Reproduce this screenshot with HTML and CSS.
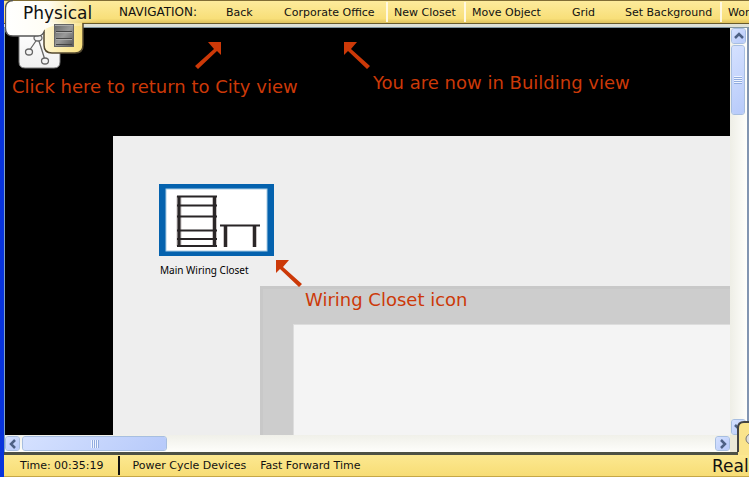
FILE: index.html
```html
<!DOCTYPE html>
<html lang="en">
<head>
<meta charset="utf-8">
<title>Physical workspace</title>
<link rel="stylesheet" href="styles.css">
</head>
<body>
<div class="app">
  <header class="topbar">
    <nav class="nav">
      <span class="nav-label">NAVIGATION:</span>
      <button>Back</button>
      <button>Corporate Office</button>
      <button class="divided">New Closet</button>
      <button class="divided">Move Object</button>
      <button>Grid</button>
      <button>Set Background</button>
      <button class="divided">Wor</button>
    </nav>
    <div class="mode">
      <svg class="mode-art" width="96" height="72" viewBox="0 0 96 72" aria-hidden="true">
        <defs>
          <linearGradient id="white" x1="0" y1="0" x2="0" y2="1"><stop offset="0" stop-color="#fff"/><stop offset="1" stop-color="#f0f0f0"/></linearGradient>
          <linearGradient id="fade" x1="0" y1="0" x2="1" y2="0"><stop offset="0" stop-color="#fff"/><stop offset=".45" stop-color="#fffdf4"/><stop offset="1" stop-color="#fbe698" stop-opacity="0"/></linearGradient>
          <linearGradient id="gold" x1="0" y1="0" x2="1" y2="0"><stop offset="0" stop-color="#fff6d2"/><stop offset="1" stop-color="#f8df7c"/></linearGradient>
          <linearGradient id="rack" x1="0" y1="0" x2="1" y2="1"><stop offset="0" stop-color="#666"/><stop offset=".5" stop-color="#999"/><stop offset="1" stop-color="#555"/></linearGradient>
        </defs>
        <path d="M14 30V62Q14 68 20 68H49Q55 68 55 62V30Z" fill="url(#white)" stroke="#777"/>
        <g fill="#f4f4f4" stroke="#666" stroke-width="1.3"><path d="M33 38L24 51M33 38L40 60"/><ellipse cx="33" cy="38" rx="4" ry="3"/><ellipse cx="24" cy="52" rx="3.5" ry="3"/><ellipse cx="40" cy="61" rx="3.5" ry="3"/></g>
        <path d="M39 22V45Q39 53 47 53H70Q78 53 78 45V23" fill="url(#gold)" stroke="#554a30" stroke-width="1.5"/>
        <path d="M0 8Q0 1 8 1H96V22H77V26H48Q39 28 38 32Q36 36 32 36H8Q0 36 0 28Z" fill="url(#fade)"/>
        <path d="M8 .5Q.5 1 .5 8V28Q.5 36 8 36H33Q37 36 39 32" fill="none" stroke="#555" stroke-width="1.3"/>
        <rect x="49.5" y="24.5" width="19" height="22" fill="url(#rack)" stroke="#666"/>
        <path d="M51 31.5H67M51 38.5H67M51 44.5H67" stroke="#444"/><path d="M50 25.5H68M51 32.5H67M51 39.5H67" stroke="#aaa"/>
      </svg>
      <button class="mode-name">Physical</button>
    </div>
  </header>

  <main class="workspace">
    <div class="canvas">
      <div class="building"></div>
      <div class="wall"></div>
      <div class="room"></div>
      <figure class="closet">
        <svg width="115" height="72" viewBox="0 0 115 72" role="img" aria-label="Rack and table">
          <rect width="115" height="72" fill="#0462ae"/>
          <rect x="7" y="5" width="101" height="62" fill="#fff" stroke="#a9cbe3"/>
          <path d="M20 12V62M55.500 12V62M66.500 42V63M95.500 42V63" stroke="#c9c4c4" stroke-width="5" fill="none"/>
          <path d="M20 12V62M55.500 12V62M66.500 42V63M95.500 42V63" stroke="#2b2728" stroke-width="3" fill="none"/>
          <path d="M18 12.500H58M18 21.500H58M18 32.500H58M18 46.500H58M18 55H58M18 62H58M61 41.500H101" stroke="#292526" stroke-width="2"/>
        </svg>
        <figcaption>Main Wiring Closet</figcaption>
      </figure>
      <svg class="arrow arrow-back" viewBox="0 0 27 27"><path d="M27 0V13L23 9L4 27L1 24L20 7L14 0Z"/></svg>
      <svg class="arrow arrow-office" viewBox="0 0 27 27"><path d="M0 0V13L4 9L23 27L26 24L7 7L13 0Z"/></svg>
      <svg class="arrow arrow-closet" viewBox="0 0 27 27"><path d="M0 0V13L4 9L23 27L26 24L7 7L13 0Z"/></svg>
      <p class="note note-back">Click here to return to City view</p>
      <p class="note note-office">You are now in Building view</p>
      <p class="note note-closet">Wiring Closet icon</p>
    </div>
    <div class="scroll vertical">
      <button class="step" aria-label="Scroll up"><svg width="10" height="8" viewBox="0 0 10 8"><path d="M1 6L5 2L9 6"/></svg></button>
      <div class="thumb"><span class="grip"></span></div>
      <button class="step end" aria-label="Scroll down"><svg width="10" height="8" viewBox="0 0 10 8"><path d="M1 2L5 6L9 2"/></svg></button>
    </div>
    <div class="scroll horizontal">
      <button class="step" aria-label="Scroll left"><svg width="8" height="10" viewBox="0 0 8 10"><path d="M6 1L2 5L6 9"/></svg></button>
      <div class="thumb"><span class="grip"></span></div>
      <button class="step end" aria-label="Scroll right"><svg width="8" height="10" viewBox="0 0 8 10"><path d="M2 1L6 5L2 9"/></svg></button>
    </div>
    <div class="corner"></div>
  </main>

  <footer class="statusbar">
    <span class="time">Time: 00:35:19</span>
    <button>Power Cycle Devices</button>
    <button>Fast Forward Time</button>
    <div class="realtime">
      <svg width="12" height="34" viewBox="0 0 12 34" aria-hidden="true"><path d="M1 34V7Q1 1 7 1H12V34Z" fill="#fae48c"/><path d="M1 31V7Q1 1 7 1H12" fill="none" stroke="#444" stroke-width="2"/><circle cx="14" cy="18" r="5" fill="#ddd" stroke="#777"/></svg>
    </div>
    <button class="real">Real</button>
  </footer>
</div>
</body>
</html>
```
FILE: styles.css
```css
* { box-sizing: border-box; }
body {
  margin: 0;
  font-family: "DejaVu Sans", Verdana, sans-serif;
  font-size: 11px;
  color: #111;
}
button {
  padding: 0;
  border: 0;
  background: none;
  font: inherit;
  color: inherit;
  white-space: nowrap;
  text-align: left;
}
.app {
  display: grid;
  grid-template-rows: 28px 1fr 25px;
  height: 100vh;
  overflow: hidden;
  border-left: 4px solid #0834dc;
  background: #000;
}
.topbar {
  position: relative;
  z-index: 2;
  min-width: 0;
  border-bottom: 1px solid #8195a0;
  background: #dfe2d8;
}
.nav {
  display: grid;
  grid-template-columns: 107px 58px 102px 78px 108px 53px 95px 1fr;
  align-items: center;
  height: 24px;
  padding-left: 115px;
  overflow: hidden;
  border-top: 1px solid #806d35;
  border-bottom: 1px solid #665a2d;
  background: linear-gradient(#fdeb9c, #f8df79 80%, #dfc25d);
}
.nav-label { font-size: 12px; }
.nav button { height: 20px; }
.nav .divided {
  padding-left: 6px;
  border-left: 2px solid #fff8df;
}
.mode {
  position: absolute;
  top: 0;
  left: 1px;
}
.mode-art { display: block; }
.mode-name {
  position: absolute;
  top: 3px;
  left: 18px;
  font-size: 17px;
  line-height: 20px;
}
.workspace {
  display: grid;
  grid-template-columns: 1fr 19px;
  grid-template-rows: 1fr 17px;
  min-height: 0;
  border-left: 1px solid #7ca2c5;
}
.canvas {
  position: relative;
  overflow: hidden;
  background: #000;
}
.building, .wall, .room {
  position: absolute;
  right: 0;
  bottom: 0;
}
.building { left: 108px; top: 108px; background: #eee; }
.wall { left: 255px; top: 258px; background: #cdcdcd; border: solid #c8c8c8; border-width: 3px 0 0 3px; }
.room { left: 288px; top: 296px; background: #f4f4f4; border-left: 1px solid #ddd; border-top: 1px solid #ddd; }
.closet {
  position: absolute;
  left: 154px;
  top: 156px;
  margin: 0;
}
.closet svg { display: block; }
.closet figcaption {
  padding: 7px 0 0 1px;
  font-family: "Noto Sans", sans-serif;
  font-size: 10px;
  line-height: 14px;
  color: #000;
  white-space: nowrap;
}
.note {
  position: absolute;
  margin: 0;
  font-size: 18px;
  line-height: 22px;
  color: #cc3908;
  white-space: nowrap;
}
.note-back { left: 7px; top: 48px; }
.note-office { left: 368px; top: 44px; }
.note-closet { left: 300px; top: 261px; }
.arrow {
  position: absolute;
  width: 27px;
  height: 27px;
  fill: #cc3908;
}
.arrow-back { left: 189px; top: 14px; }
.arrow-office { left: 339px; top: 14px; }
.arrow-closet { left: 271px; top: 232px; }
.scroll {
  display: flex;
  background: linear-gradient(90deg, #eeeee6, #fefefb);
}
.vertical {
  flex-direction: column;
  padding: 0 2px 0 1px;
  border-right: 2px solid #8295b1;
}
.horizontal {
  padding: 1px 0;
  background: linear-gradient(#f0f0e9, #fefefb);
}
.step, .thumb {
  display: flex;
  align-items: center;
  justify-content: center;
  flex: none;
  border: 1px solid #fff;
  border-radius: 3px;
  outline: 1px solid #a7bee0;
  outline-offset: -1px;
  background: linear-gradient(135deg, #d5e1ff, #b7cafa);
}
.step { width: 15px; height: 15px; }
.step svg { flex: none; fill: none; stroke: #4d6185; stroke-width: 2.5; }
.end { margin-left: auto; }
.vertical .step { width: 15px; height: 16px; }
.vertical .end { margin: auto 0 0; }
.vertical .thumb { height: 70px; margin-top: 1px; }
.horizontal .thumb { width: 145px; margin-left: 2px; }
.grip { width: 8px; height: 8px; }
.vertical .grip { background: repeating-linear-gradient(#eff4ff 0 1px, #91acdf 1px 2px); }
.horizontal .grip { background: repeating-linear-gradient(90deg, #eff4ff 0 1px, #91acdf 1px 2px); }
.corner { background: #ece9d8; border-right: 2px solid #8295b1; }
.statusbar {
  position: relative;
  display: flex;
  align-items: center;
  border-top: 3px solid #4d5145;
  border-bottom: 1px solid #c5a747;
  background: linear-gradient(#fce891, #f7dd75);
}
.time {
  padding: 3px 14px 3px 16px;
  border-right: 2px solid #111;
}
.time + button { margin: 0 14px 0 13px; }
.real {
  position: absolute;
  left: calc(100% - 37px);
  font-size: 17px;
  line-height: 20px;
}
.realtime {
  position: absolute;
  right: 0;
  bottom: -1px;
  height: 56px;
}
.realtime svg { display: block; }
```
